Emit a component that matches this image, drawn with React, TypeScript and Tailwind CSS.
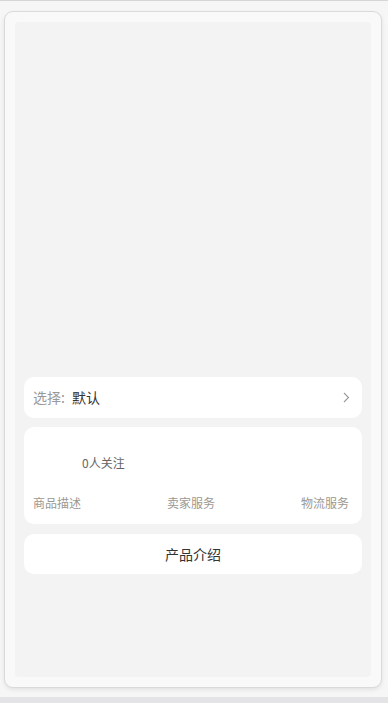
export default function App() {
  const font = { fontFamily: '"Noto Sans CJK SC", "Noto Sans", sans-serif' };
  return (
    <div className="h-[703px] w-[388px] bg-[#e4e4e6] overflow-hidden" style={font}>
      <div className="h-[697px] border-t border-[#d6d6d6] bg-[#f6f6f6] pt-[10px] pl-[4px] pr-[6px]">
        <div className="h-[677px] rounded-[9px] border border-[#dadada] bg-[#f9f9f9] p-[10px] shadow-[0_2px_4px_rgba(0,0,0,0.08)]">
          <div className="flex h-full flex-col gap-[9px] rounded-[4px] bg-[#f3f3f3] px-[9px]">
            {/* image area */}
            <div className="h-[346px] shrink-0" />

            {/* sku selector */}
            <div className="flex h-[41px] items-center rounded-[10px] bg-white pl-[9px] pr-[12px] text-[14px]">
              <span className="text-[#999]">选择:</span>
              <span className="ml-[7px] text-[#333]">默认</span>
              <svg className="ml-auto" width="7" height="11" viewBox="0 0 7 11" fill="none">
                <path d="M1 1l4.5 4.5L1 10" stroke="#9a9a9a" strokeWidth="1.1" />
              </svg>
            </div>

            {/* shop info */}
            <div className="rounded-[10px] bg-white pt-[27px] pb-[13px]">
              <div className="pl-[58px] text-[12px] leading-[17px] text-[#666]">0人关注</div>
              <div className="mt-[23px] flex justify-between pl-[9px] pr-[13px] text-[12px] leading-[17px] text-[#9c9891]">
                <span>商品描述</span>
                <span>卖家服务</span>
                <span>物流服务</span>
              </div>
            </div>

            {/* intro */}
            <div className="mt-[1px] flex h-[40px] items-center justify-center rounded-[10px] bg-white text-[14px] text-[#333]">
              产品介绍
            </div>
          </div>
        </div>
      </div>
    </div>
  );
}
